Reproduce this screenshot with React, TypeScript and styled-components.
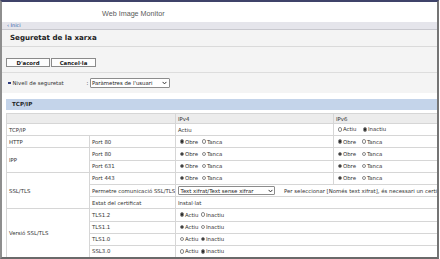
import React from "react";
import styled, { createGlobalStyle } from "styled-components";

const GlobalStyle = createGlobalStyle`
	html, body {
		margin: 0;
		padding: 0;
		background: #ffffff;
	}
	body {
		font-family: "DejaVu Sans", Verdana, sans-serif;
		color: #333333;
	}
`;

const Frame = styled.div`
	width: 435px;
	height: 255px;
	border-top: 2px solid #3f4369;
	border-left: 2px solid #8e8e8e;
	border-right: 2px solid #747474;
	border-bottom: 2px solid #6a6a6a;
	overflow: hidden;
	background: #ffffff;
`;

const TopBar = styled.div`
	height: 20px;
	box-sizing: border-box;
	padding: 7px 0 0 100px;
	font-family: "Liberation Sans", Arial, sans-serif;
	font-size: 7.2px;
	line-height: 10px;
	color: #5a5a5a;
`;

const Crumb = styled.div`
	height: 7px;
	border-bottom: 1px solid #c8c8ce;
	background: #e5e5eb;
	padding-left: 5px;
	font-size: 5px;
	line-height: 7px;
	color: #2c5ca8;
`;

const Panel = styled.div`
	background: #f4f4f4;
`;

const TitleRow = styled.div`
	height: 16px;
	border-bottom: 1px solid #dadada;
	padding-left: 8px;
	font-size: 7.1px;
	font-weight: bold;
	line-height: 16px;
	color: #222222;
`;

const ButtonRow = styled.div`
	display: flex;
	padding: 11px 0 5px 4px;
	border-bottom: 1px solid #dddddd;
`;

const Btn = styled.span<{ $w: number }>`
	display: inline-flex;
	align-items: center;
	justify-content: center;
	box-sizing: border-box;
	width: ${(p) => p.$w}px;
	height: 9px;
	margin-right: 1px;
	border: 1px solid #8a8a8a;
	background: #fdfdfd;
	font-size: 5.4px;
	font-weight: bold;
	color: #222222;
`;

const LevelRow = styled.div`
	display: flex;
	align-items: center;
	height: 10px;
	padding: 5px 0 5px 6px;
	font-size: 5.4px;
	color: #333333;
`;

const Bullet = styled.span`
	width: 2.5px;
	height: 2.5px;
	margin-right: 2px;
	background: #2e3c80;
`;

const LevelLabel = styled.span`
	width: 74px;
`;

const Colon = styled.span`
	width: 3px;
`;

const FakeSelect = styled.span<{ $w: number }>`
	display: inline-flex;
	align-items: center;
	justify-content: space-between;
	box-sizing: border-box;
	width: ${(p) => p.$w}px;
	height: 9.5px;
	padding: 0 1.5px 0 1.5px;
	border: 1px solid #8c8c8c;
	border-radius: 1px;
	background: #ffffff;
	font-size: 5.4px;
	color: #222222;
	white-space: nowrap;
`;

const SectionBar = styled.div`
	margin: 6px 0 0 4px;
	height: 11px;
	padding-left: 6px;
	background: #c4d4ea;
	font-size: 5.6px;
	font-weight: bold;
	line-height: 11px;
	color: #1e1e1e;
`;

const Table = styled.table`
	margin: 3px 0 0 4px;
	border-collapse: collapse;
	table-layout: fixed;
	width: 600px;
	font-size: 5.4px;
	color: #333333;
`;

const HeadRow = styled.tr`
	height: 10px;
	background: #ececec;
`;

const BodyRow = styled.tr`
	height: 12.2px;
`;

const Cell = styled.td`
	border: 1px solid #d6d6d6;
	padding: 0 2px;
	white-space: nowrap;
	overflow: hidden;
	vertical-align: middle;
	line-height: 8px;
`;

const HeadCell = styled(Cell)`
	font-weight: normal;
	text-align: left;
`;

const Options = styled.span`
	display: inline-flex;
	align-items: center;
`;

const Option = styled.span<{ $min?: number }>`
	display: inline-flex;
	align-items: center;
	min-width: ${(p) => p.$min ?? 0}px;
`;

const Radio = styled.span<{ $on: boolean }>`
	display: inline-block;
	box-sizing: border-box;
	width: 4.6px;
	height: 4.6px;
	margin: 0 0.8px 0 1.5px;
	border-radius: 50%;
	border: 0.8px solid #8a8a8a;
	background: ${(p) =>
		p.$on
			? "radial-gradient(circle, #222 0 1.1px, #fff 1.4px)"
			: "#ffffff"};
`;

const Note = styled.span`
	margin-left: 9px;
`;

const SelectRow = styled.span`
	display: inline-flex;
	align-items: center;
`;

const Chevron = () => (
	<svg width="5" height="4" viewBox="0 0 5 4">
		<polyline points="0.6,0.9 2.5,2.9 4.4,0.9" fill="none" stroke="#333" strokeWidth="1" />
	</svg>
);

const RadioPair = ({ options, value, first }: { options: string[]; value: string; first: number }) => (
	<Options>
		{options.map((o, i) => (
			<Option key={o} $min={i === 0 ? first : 0}>
				<Radio $on={o === value} />
				{o}
			</Option>
		))}
	</Options>
);

const OpenClose = ({ first = 22 }: { first?: number }) => (
	<RadioPair options={["Obre", "Tanca"]} value="Obre" first={first} />
);

const OnOff = ({ value }: { value: string }) => (
	<RadioPair options={["Actiu", "Inactiu"]} value={value} first={21} />
);

const App = () => {
	return (
		<>
			<GlobalStyle />
			<Frame>
				<TopBar>Web Image Monitor</TopBar>
				<Crumb>‹ Inici</Crumb>
				<Panel>
					<TitleRow>Seguretat de la xarxa</TitleRow>
					<ButtonRow>
						<Btn $w={44}>D'acord</Btn>
						<Btn $w={45}>Cancel·la</Btn>
					</ButtonRow>
					<LevelRow>
						<Bullet />
						<LevelLabel>Nivell de seguretat</LevelLabel>
						<Colon>:</Colon>
						<FakeSelect $w={80}>
							Paràmetres de l'usuari
							<Chevron />
						</FakeSelect>
					</LevelRow>
				</Panel>
				<SectionBar>TCP/IP</SectionBar>
				<Table>
					<colgroup>
						<col style={{ width: 83 }} />
						<col style={{ width: 86 }} />
						<col style={{ width: 158 }} />
						<col style={{ width: 273 }} />
					</colgroup>
					<thead>
						<HeadRow>
							<HeadCell as="th" colSpan={2} />
							<HeadCell as="th">IPv4</HeadCell>
							<HeadCell as="th">IPv6</HeadCell>
						</HeadRow>
					</thead>
					<tbody>
						<BodyRow>
							<Cell colSpan={2}>TCP/IP</Cell>
							<Cell>Actiu</Cell>
							<Cell>
								<RadioPair options={["Actiu", "Inactiu"]} value="Inactiu" first={25} />
							</Cell>
						</BodyRow>
						<BodyRow>
							<Cell>HTTP</Cell>
							<Cell>Port 80</Cell>
							<Cell><OpenClose /></Cell>
							<Cell><OpenClose first={24} /></Cell>
						</BodyRow>
						<BodyRow>
							<Cell rowSpan={2}>IPP</Cell>
							<Cell>Port 80</Cell>
							<Cell><OpenClose /></Cell>
							<Cell><OpenClose first={24} /></Cell>
						</BodyRow>
						<BodyRow>
							<Cell>Port 631</Cell>
							<Cell><OpenClose /></Cell>
							<Cell><OpenClose first={24} /></Cell>
						</BodyRow>
						<BodyRow>
							<Cell rowSpan={3}>SSL/TLS</Cell>
							<Cell>Port 443</Cell>
							<Cell><OpenClose /></Cell>
							<Cell><OpenClose first={24} /></Cell>
						</BodyRow>
						<BodyRow>
							<Cell>Permetre comunicació SSL/TLS</Cell>
							<Cell colSpan={2}>
								<SelectRow>
									<FakeSelect $w={97}>
										Text xifrat/Text sense xifrar
										<Chevron />
									</FakeSelect>
									<Note>Per seleccionar [Només text xifrat], és necessari un certificat de dispositiu.</Note>
								</SelectRow>
							</Cell>
						</BodyRow>
						<BodyRow>
							<Cell>Estat del certificat</Cell>
							<Cell colSpan={2}>Instal·lat</Cell>
						</BodyRow>
						<BodyRow>
							<Cell rowSpan={4}>Versió SSL/TLS</Cell>
							<Cell>TLS1.2</Cell>
							<Cell colSpan={2}><OnOff value="Actiu" /></Cell>
						</BodyRow>
						<BodyRow>
							<Cell>TLS1.1</Cell>
							<Cell colSpan={2}><OnOff value="Actiu" /></Cell>
						</BodyRow>
						<BodyRow>
							<Cell>TLS1.0</Cell>
							<Cell colSpan={2}><OnOff value="Inactiu" /></Cell>
						</BodyRow>
						<BodyRow>
							<Cell>SSL3.0</Cell>
							<Cell colSpan={2}><OnOff value="Inactiu" /></Cell>
						</BodyRow>
					</tbody>
				</Table>
			</Frame>
		</>
	);
};

export default App;
